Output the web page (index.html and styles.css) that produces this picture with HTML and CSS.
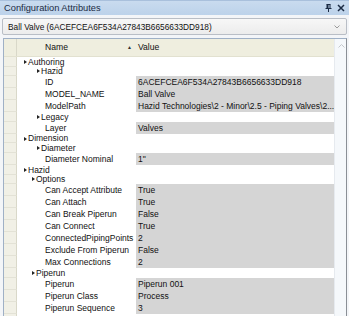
FILE: index.html
```html
<!DOCTYPE html>
<html lang="en">
<head>
  <meta charset="UTF-8">
  <meta name="viewport" content="width=device-width, initial-scale=1.0">
  <title>Configuration Attributes</title>
  <link rel="stylesheet" href="styles.css">
</head>
<body>

<div class="panel">
  <div class="titlebar">
    <span class="title">Configuration Attributes</span>
    <span class="tools">
      <svg width="7" height="8" viewBox="0 0 7 8"><path d="M1.5 0.5h4M2 0.5v3.5M5 0.5v3.5M0.5 4.5h6M3.5 4.5v3.5" stroke="#1b2b44" stroke-width="1" fill="none"/><path d="M2 1h1.5v3h-1.5z" fill="#1b2b44"/></svg>
      <svg width="8" height="8" viewBox="0 0 8 8"><path d="M1 1l6 6M7 1l-6 6" stroke="#1b2b44" stroke-width="1.5" fill="none"/></svg>
    </span>
  </div>

  <div class="combo">
    <span>Ball Valve (6ACEFCEA6F534A27843B6656633DD918)</span>
    <svg width="6" height="4" viewBox="0 0 6 4"><path d="M0.5 0.5l2.5 2.5l2.5-2.5" stroke="#9a9a9a" stroke-width="1" fill="none"/></svg>
  </div>

  <div class="grid">
    <div class="table">
      <div class="row head">
        <div class="gut"></div>
        <div class="name">Name<span class="sort">▲</span></div>
        <div class="value">Value</div>
      </div>

      <div class="row group l1"><div class="gut"></div><div class="name"><i class="tri"></i>Authoring</div><div class="value"></div></div>
      <div class="row group l2"><div class="gut"></div><div class="name"><i class="tri"></i>Hazid</div><div class="value"></div></div>
      <div class="row leaf"><div class="gut"></div><div class="name">ID</div><div class="value">6ACEFCEA6F534A27843B6656633DD918</div></div>
      <div class="row leaf"><div class="gut"></div><div class="name">MODEL_NAME</div><div class="value">Ball Valve</div></div>
      <div class="row leaf"><div class="gut"></div><div class="name">ModelPath</div><div class="value">Hazid Technologies\2 - Minor\2.5 - Piping Valves\2...</div></div>
      <div class="row group l2"><div class="gut"></div><div class="name"><i class="tri"></i>Legacy</div><div class="value"></div></div>
      <div class="row leaf"><div class="gut"></div><div class="name">Layer</div><div class="value">Valves</div></div>
      <div class="row group l1"><div class="gut"></div><div class="name"><i class="tri"></i>Dimension</div><div class="value"></div></div>
      <div class="row group l2"><div class="gut"></div><div class="name"><i class="tri"></i>Diameter</div><div class="value"></div></div>
      <div class="row leaf"><div class="gut"></div><div class="name">Diameter Nominal</div><div class="value">1"</div></div>
      <div class="row group l1"><div class="gut"></div><div class="name"><i class="tri"></i>Hazid</div><div class="value"></div></div>
      <div class="row group l2b"><div class="gut"></div><div class="name"><i class="tri"></i>Options</div><div class="value"></div></div>
      <div class="row leaf"><div class="gut"></div><div class="name">Can Accept Attribute</div><div class="value">True</div></div>
      <div class="row leaf"><div class="gut"></div><div class="name">Can Attach</div><div class="value">True</div></div>
      <div class="row leaf"><div class="gut"></div><div class="name">Can Break Piperun</div><div class="value">False</div></div>
      <div class="row leaf"><div class="gut"></div><div class="name">Can Connect</div><div class="value">True</div></div>
      <div class="row leaf"><div class="gut"></div><div class="name">ConnectedPipingPoints</div><div class="value">2</div></div>
      <div class="row leaf"><div class="gut"></div><div class="name">Exclude From Piperun</div><div class="value">False</div></div>
      <div class="row leaf"><div class="gut"></div><div class="name">Max Connections</div><div class="value">2</div></div>
      <div class="row group l2b"><div class="gut"></div><div class="name"><i class="tri"></i>Piperun</div><div class="value"></div></div>
      <div class="row leaf"><div class="gut"></div><div class="name">Piperun</div><div class="value">Piperun 001</div></div>
      <div class="row leaf"><div class="gut"></div><div class="name">Piperun Class</div><div class="value">Process</div></div>
      <div class="row leaf"><div class="gut"></div><div class="name">Piperun Sequence</div><div class="value">3</div></div>
      <div class="row group l2b"><div class="gut"></div><div class="name"><i class="tri"></i></div><div class="value"></div></div>
    </div>

    <div class="vscroll">
      <svg width="7" height="4" viewBox="0 0 7 4"><path d="M0.5 3.5l3-3l3 3" stroke="#c4c8cc" stroke-width="1" fill="none"/></svg>
    </div>
  </div>
</div>

</body>
</html>
```

FILE: styles.css
```css
html, body {
  margin: 0;
  height: 100%;
  overflow: hidden;
}

body {
  background: #f3f5f8;
  font-family: 'Liberation Sans', Arial, sans-serif;
  color: #111;
}

.panel {
  width: 349px;
  height: 316px;
  display: flex;
  flex-direction: column;
  overflow: hidden;
}

.titlebar {
  height: 14px;
  flex: none;
  display: flex;
  align-items: center;
  justify-content: space-between;
  padding: 0 4px 0 4px;
  background: linear-gradient(#c9dbef, #bcd2ea);
  border-top: 1px solid #a9c0dc;
  color: #1b2b44;
  font-size: 9.3px;
}

.tools {
  display: flex;
  align-items: center;
  gap: 5px;
}

.combo {
  margin: 3px 2px 0 2px;
  height: 15px;
  flex: none;
  display: flex;
  align-items: center;
  justify-content: space-between;
  padding: 0 6px 0 5px;
  border: 1px solid #b9bec6;
  border-radius: 2px;
  background: linear-gradient(#f7f7f7, #ececec);
  font-size: 8.3px;
  color: #111;
}

.grid {
  margin: 3px 2px 0 3px;
  flex: 1;
  display: flex;
  border: 1px solid #9fb0c6;
  border-right-color: #8a8f96;
  border-bottom: none;
  background: #fff;
  overflow: hidden;
}

.table {
  flex: 1;
  display: flex;
  flex-direction: column;
}

.row {
  flex: none;
  display: flex;
  font-size: 8.5px;
  line-height: 1;
}

.row .gut {
  width: 13px;
  flex: none;
  background: #f1f0e6;
  border-right: 1px solid #d9d8c9;
  border-bottom: 1px solid #e3e2d6;
  box-sizing: border-box;
}

.row .name {
  width: 119px;
  flex: none;
  display: flex;
  align-items: center;
  white-space: nowrap;
}

.row .value {
  flex: 1;
  display: flex;
  align-items: center;
  padding-left: 2px;
  white-space: nowrap;
  overflow: hidden;
}

.head {
  height: 17px;
  background: #efeedf;
  border-bottom: 1px solid #e2e1d0;
  font-size: 8.6px;
}

.head .gut {
  background: #efeedf;
  border-bottom: none;
}

.head .name {
  padding-left: 28px;
  justify-content: space-between;
  padding-right: 4px;
  box-sizing: border-box;
}

.sort {
  font-size: 5px;
  color: #333;
}

.group {
  height: 9.6px;
}

.leaf {
  height: 12px;
}

.leaf .name {
  padding-left: 28px;
  box-sizing: border-box;
}

.leaf .value {
  background: #d5d5d5;
}

.l1 .name { padding-left: 7px; }
.l2 .name { padding-left: 20px; }
.l2b .name { padding-left: 15px; }

.tri {
  display: inline-block;
  width: 0;
  height: 0;
  border-left: 3px solid #222;
  border-top: 2.5px solid transparent;
  border-bottom: 2.5px solid transparent;
  margin-right: 1px;
}

.vscroll {
  width: 14px;
  flex: none;
  background: #f5f8fb;
  border-left: 1px solid #e6eaef;
  display: flex;
  justify-content: center;
  padding-top: 5px;
  box-sizing: border-box;
}
```
